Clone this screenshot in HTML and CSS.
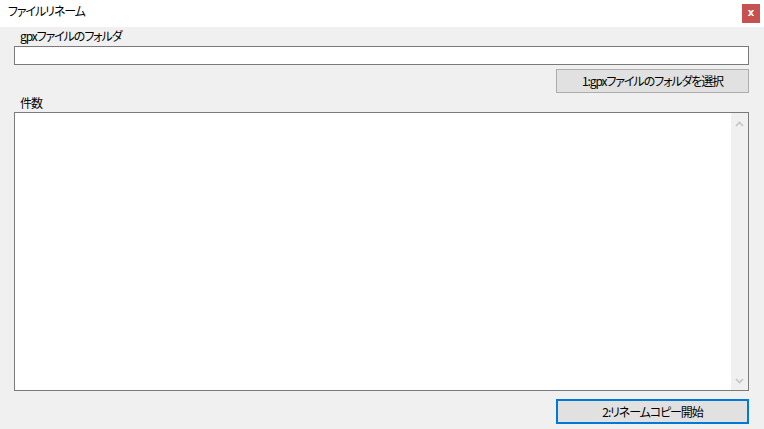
FILE: index.html
```html
<!DOCTYPE html>
<html>
  <head>
    <title>ファイルリネーム</title>
    <link rel="stylesheet" href="styles.css">
  </head>
  <body>
    <div class="window">
      <div class="titlebar">
        <div class="title">ファイルリネーム</div>
        <div class="close">x</div>
      </div>
      <div class="content">
        <div class="label">gpxファイルのフォルダ</div>
        <div class="input"></div>
        <div class="row">
          <div class="button">1:gpxファイルのフォルダを選択</div>
        </div>
        <div class="label second">件数</div>
        <div class="list">
          <div class="list-body"></div>
          <div class="scrollbar">
            <svg width="9" height="6" viewBox="0 0 9 6"><path d="M1 5 L4.5 1.5 L8 5" fill="none" stroke="#c4c4c4" stroke-width="1.6"/></svg>
            <svg width="9" height="6" viewBox="0 0 9 6"><path d="M1 1 L4.5 4.5 L8 1" fill="none" stroke="#c4c4c4" stroke-width="1.6"/></svg>
          </div>
        </div>
        <div class="row bottom">
          <div class="button focused">2:リネームコピー開始</div>
        </div>
      </div>
    </div>
  </body>
</html>
```

FILE: styles.css
```css
body {
  margin: 0;
  font-family: "Noto Sans CJK JP", "Noto Sans", sans-serif;
  font-size: 12px;
  font-feature-settings: "palt";
  letter-spacing: -1.1px;
  color: #000;
  background-color: #f0f0f0;
}
.window {
  width: 764px;
  height: 429px;
  display: flex;
  flex-direction: column;
  overflow: hidden;
}
.titlebar {
  height: 27px;
  background-color: #fff;
  display: flex;
  align-items: flex-start;
  justify-content: space-between;
}
.title {
  padding-left: 8px;
  line-height: 22px;
  font-size: 12px;
}
.close {
  width: 18px;
  height: 19px;
  margin-top: 4px;
  margin-right: 4px;
  background-color: #c75050;
  color: #fff;
  font-family: "DejaVu Sans", sans-serif;
  font-weight: bold;
  font-size: 10px;
  letter-spacing: 0;
  line-height: 18px;
  text-align: center;
}
.content {
  flex: 1;
  padding: 0 15px 0 14px;
  border-left: 2px solid #e4e4e4;
  margin-left: -2px;
  display: flex;
  flex-direction: column;
}
.label {
  padding-left: 6px;
  margin-top: 1px;
  line-height: 16px;
  height: 16px;
}
.label.second {
  margin-top: 2px;
}
.input {
  margin-top: 2px;
  height: 17px;
  border: 1px solid #7a7a7a;
  background-color: #fff;
}
.row {
  display: flex;
  justify-content: flex-end;
  margin-top: 4px;
}
.row.bottom {
  margin-top: 8px;
}
.button {
  width: 191px;
  height: 22px;
  border: 1px solid #adadad;
  background-color: #e1e1e1;
  text-align: center;
  line-height: 21px;
}
.button.focused {
  width: 189px;
  height: 21px;
  border: 2px solid #0078d7;
}
.list {
  margin-top: 1px;
  height: 277px;
  border: 1px solid #7a7a7a;
  background-color: #fff;
  display: flex;
}
.list-body {
  flex: 1;
}
.scrollbar {
  width: 17px;
  background-color: #f0f0f0;
  display: flex;
  flex-direction: column;
  justify-content: space-between;
  align-items: center;
  padding: 8px 0 6px;
}
```
